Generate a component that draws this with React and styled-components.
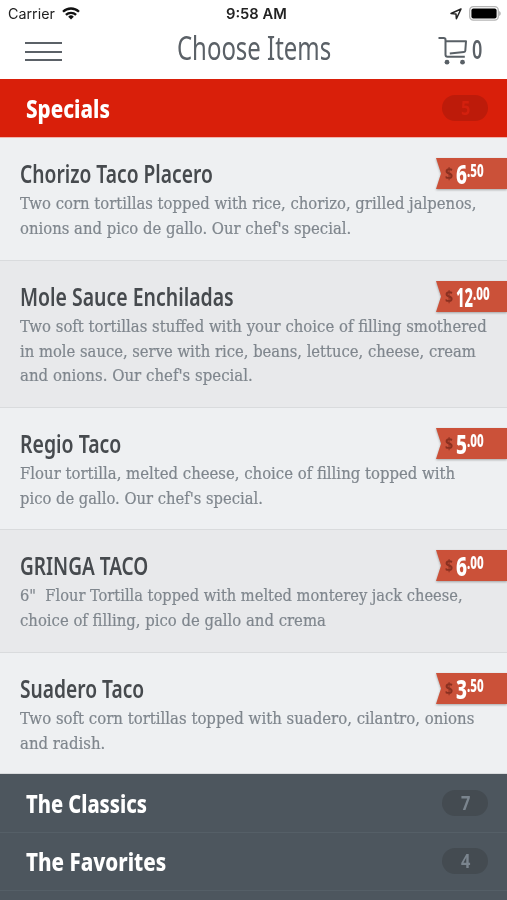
import React, { useLayoutEffect, useRef, useState } from "react";
import styled, { createGlobalStyle } from "styled-components";

const SPECIALS = [
  {
    name: "Chorizo Taco Placero",
    nameWidth: 193,
    price: ["6", ".50"],
    height: 123,
    lines: [
      ["Two corn tortillas topped with rice, chorizo, grilled jalpenos,", 456],
      ["onions and pico de gallo. Our chef's special.", 331]
    ]
  },
  {
    name: "Mole Sauce Enchiladas",
    nameWidth: 214,
    price: ["12", ".00"],
    height: 147,
    lines: [
      ["Two soft tortillas stuffed with your choice of filling smothered", 467],
      ["in mole sauce, serve with rice, beans, lettuce, cheese, cream", 456],
      ["and onions. Our chef's special.", 233]
    ]
  },
  {
    name: "Regio Taco",
    nameWidth: 101,
    price: ["5", ".00"],
    height: 122,
    lines: [
      ["Flour tortilla, melted cheese, choice of filling topped with", 435],
      ["pico de gallo. Our chef's special.", 243]
    ]
  },
  {
    name: "GRINGA TACO",
    nameWidth: 128,
    price: ["6", ".00"],
    height: 123,
    lines: [
      ["6\"  Flour Tortilla topped with melted monterey jack cheese,", 443],
      ["choice of filling, pico de gallo and crema", 306]
    ]
  },
  {
    name: "Suadero Taco",
    nameWidth: 124,
    price: ["3", ".50"],
    height: 121,
    lines: [
      ["Two soft corn tortillas topped with suadero, cilantro, onions", 454],
      ["and radish.", 85]
    ]
  }
];

// Condenses its text horizontally so that it fills the given width
const Condensed = ({ width, children }) => {
  const ref = useRef(null);
  const [scale, setScale] = useState(1);

  useLayoutEffect(() => {
    setScale(width / ref.current.offsetWidth);
  }, [width, children]);

  return (
    <CondensedBox style={{ width }}>
      <CondensedText ref={ref} style={{ transform: `scaleX(${scale})` }}>
        {children}
      </CondensedText>
    </CondensedBox>
  );
};

const CartIcon = () => (
  <svg width="30" height="30" viewBox="0 0 30 30" fill="none" stroke="#596066" strokeWidth="2">
    <path d="M0.5 2h5.200q1.800 0 1.800 1.800v15q0 2 2 2h17.300" />
    <path d="M8 5.200h20l-.7 9.600q-.1 1.200-1.300 1.300L11.800 17.500" strokeLinejoin="round" />
    <circle cx="9" cy="26.200" r="2.400" fill="#596066" stroke="none" />
    <circle cx="24.500" cy="26.200" r="2.400" fill="#596066" stroke="none" />
  </svg>
);

const WifiIcon = () => (
  <svg width="18" height="13" viewBox="0 0 18 13" fill="none" stroke="#111" strokeWidth="2.3">
    <path d="M1 4.8a11.4 11.4 0 0 1 16 0" />
    <path d="M3.9 7.9a7.3 7.3 0 0 1 10.2 0" />
    <path d="M9 12.4 6.2 9.7a4 4 0 0 1 5.6 0z" fill="#111" stroke="none" />
  </svg>
);

const LocationIcon = () => (
  <svg width="12" height="12" viewBox="0 0 12 12" fill="none" stroke="#222" strokeWidth="1.5">
    <path d="M11 1 1 5.5l5 .5.4 4.8z" strokeLinejoin="round" />
  </svg>
);

const BatteryIcon = () => (
  <svg width="32" height="15" viewBox="0 0 32 15">
    <rect x="0.7" y="0.7" width="28.6" height="13.4" rx="3.6" fill="#fff" stroke="#b5b5b5" strokeWidth="1.3" />
    <rect x="2.4" y="2.4" width="25.2" height="10" rx="2" fill="#000" />
    <path d="M30.3 5v5c1.7-.7 1.7-4.3 0-5z" fill="#999" />
  </svg>
);

const SectionHeader = ({ title, width, count, active }) => (
  <Section $active={active}>
    <SectionTitle>
      <Condensed width={width}>{title}</Condensed>
    </SectionTitle>
    <CountPill $active={active}>
      <Condensed width={9}>{count}</Condensed>
    </CountPill>
  </Section>
);

const MenuItem = ({ item, shaded }) => {
  const [whole, cents] = item.price;
  return (
    <Item $shaded={shaded} $height={item.height}>
      <ItemTop>
        <ItemName>
          <Condensed width={item.nameWidth}>{item.name}</Condensed>
        </ItemName>
        <RibbonShadow>
          <Ribbon>
            <Currency>
              <Condensed width={8}>$</Condensed>
            </Currency>
            <Whole>
              <Condensed width={whole.length > 1 ? 17 : 11}>{whole}</Condensed>
            </Whole>
            <Cents>
              <Condensed width={17}>{cents}</Condensed>
            </Cents>
          </Ribbon>
        </RibbonShadow>
      </ItemTop>
      <Description>
        {item.lines.map(([text, width]) => (
          <DescriptionLine key={text}>
            <Condensed width={width}>{text}</Condensed>
          </DescriptionLine>
        ))}
      </Description>
    </Item>
  );
};

const App = () => (
  <>
    <GlobalStyle />
    <Screen>
      <StatusBar>
        <Carrier>
          <Condensed width={47}>Carrier</Condensed>
          <WifiIcon />
        </Carrier>
        <Clock>
          <Condensed width={61}>9:58 AM</Condensed>
        </Clock>
        <StatusIcons>
          <LocationIcon />
          <BatteryIcon />
        </StatusIcons>
      </StatusBar>
      <NavBar>
        <MenuButton aria-label="Menu">
          <MenuBar />
          <MenuBar />
          <MenuBar />
        </MenuButton>
        <NavTitle>
          <Condensed width={154}>Choose Items</Condensed>
        </NavTitle>
        <Cart>
          <CartIcon />
          <CartCount>
            <Condensed width={10}>0</Condensed>
          </CartCount>
        </Cart>
      </NavBar>
      <SectionHeader title="Specials" width={84} count="5" active />
      {SPECIALS.map((item, index) => (
        <MenuItem key={item.name} item={item} shaded={index % 2 === 1} />
      ))}
      <SectionHeader title="The Classics" width={121} count="7" />
      <SectionHeader title="The Favorites" width={140} count="4" />
      <Section />
    </Screen>
  </>
);

const GlobalStyle = createGlobalStyle`
  body {
    margin: 0;
    overflow: hidden;
    background: #4e575f;
  }

  * {
    box-sizing: border-box;
  }
`;

const Screen = styled.div`
  display: flex;
  flex-direction: column;
  width: 507px;
  height: 900px;
  overflow: hidden;
  background: #fff;
  font-family: "Noto Sans", "Open Sans", sans-serif;
`;

const CondensedBox = styled.span`
  display: inline-block;
  white-space: pre;
`;

const CondensedText = styled.span`
  display: inline-block;
  transform-origin: left;
`;

const StatusBar = styled.div`
  display: grid;
  grid-template-columns: 1fr auto 1fr;
  align-items: center;
  flex: none;
  height: 27px;
  padding: 0 6px 0 8px;
  font-family: Inter, "Liberation Sans", sans-serif;
  font-size: 14px;
  color: #222;
`;

const Carrier = styled.div`
  display: flex;
  align-items: center;
  gap: 7px;
`;

const Clock = styled.div`
  padding-left: 3px;
  font-weight: 600;
`;

const StatusIcons = styled.div`
  display: flex;
  align-items: center;
  justify-content: flex-end;
  gap: 7px;
`;

const NavBar = styled.div`
  display: grid;
  grid-template-columns: 1fr auto 1fr;
  flex: none;
  height: 52px;
  padding: 0 25px 0 25px;
  color: #5b6167;
`;

const MenuButton = styled.button`
  display: flex;
  flex-direction: column;
  gap: 6.6px;
  width: 38px;
  padding: 15px 0 0;
  border: 0;
  background: none;
`;

const MenuBar = styled.span`
  width: 37px;
  height: 2px;
  background: #5b6167;
`;

const NavTitle = styled.div`
  font-size: 32px;
  font-weight: 400;
  line-height: 42px;
`;

const Cart = styled.div`
  display: flex;
  justify-content: flex-end;
  gap: 4px;
  padding-top: 9px;
`;

const CartCount = styled.span`
  font-size: 27px;
  font-weight: 600;
  line-height: 26px;
`;

const Section = styled.div`
  display: flex;
  align-items: center;
  justify-content: space-between;
  flex: none;
  height: ${({ $active }) => ($active ? 59 : 58.5)}px;
  padding: 0 19px 0 25.5px;
  border-bottom: 1px solid ${({ $active }) => ($active ? "#f0b5ae" : "#555f67")};
  background: ${({ $active }) => ($active ? "#d91f0a" : "#4d565e")};
`;

const SectionTitle = styled.div`
  font-size: 25px;
  font-weight: 800;
  line-height: 34px;
  color: #fff;
`;

const CountPill = styled.div`
  display: flex;
  align-items: center;
  justify-content: center;
  width: 46px;
  height: 26px;
  border-radius: 13px;
  background: ${({ $active }) => ($active ? "#bd1b0a" : "#444b51")};
  color: ${({ $active }) => ($active ? "#d3200e" : "#7b858e")};
  font-size: 20px;
  font-weight: 700;
  line-height: 26px;
`;

const Item = styled.div`
  flex: none;
  height: ${({ $height }) => $height}px;
  padding: 20px 0 0 20.4px;
  border-bottom: 1px solid #d9dbdd;
  background: ${({ $shaded }) => ($shaded ? "#e8e9eb" : "#eef0f2")};
`;

const ItemTop = styled.div`
  display: flex;
  justify-content: space-between;
  height: 33px;
`;

const ItemName = styled.div`
  font-size: 26px;
  font-weight: 600;
  line-height: 31px;
  color: #464a4e;
`;

const RibbonShadow = styled.div`
  filter: drop-shadow(0 1px 1px rgba(0, 0, 0, 0.3));
`;

const Ribbon = styled.div`
  display: flex;
  width: 71px;
  height: 31px;
  padding-left: 9px;
  background: #cb5139;
  clip-path: polygon(0 0, 100% 0, 100% 100%, 0 100%, 5px 50%);
`;

const Currency = styled.span`
  width: 11px;
  font-size: 16px;
  font-weight: 700;
  line-height: 31px;
  color: #8a3020;
`;

const Whole = styled.span`
  font-size: 26px;
  font-weight: 800;
  line-height: 32px;
  color: #fff;
`;

const Cents = styled.span`
  font-size: 17px;
  font-weight: 800;
  line-height: 25px;
  color: #fff;
`;

const Description = styled.div`
  font-family: "DejaVu Serif Condensed", "DejaVu Serif", serif;
  font-stretch: condensed;
  font-size: 17px;
  color: #7f868d;
  -webkit-text-stroke: 0.2px #7f868d;
`;

const DescriptionLine = styled.div`
  height: 24.7px;
  line-height: 24.7px;
`;

export default App;
